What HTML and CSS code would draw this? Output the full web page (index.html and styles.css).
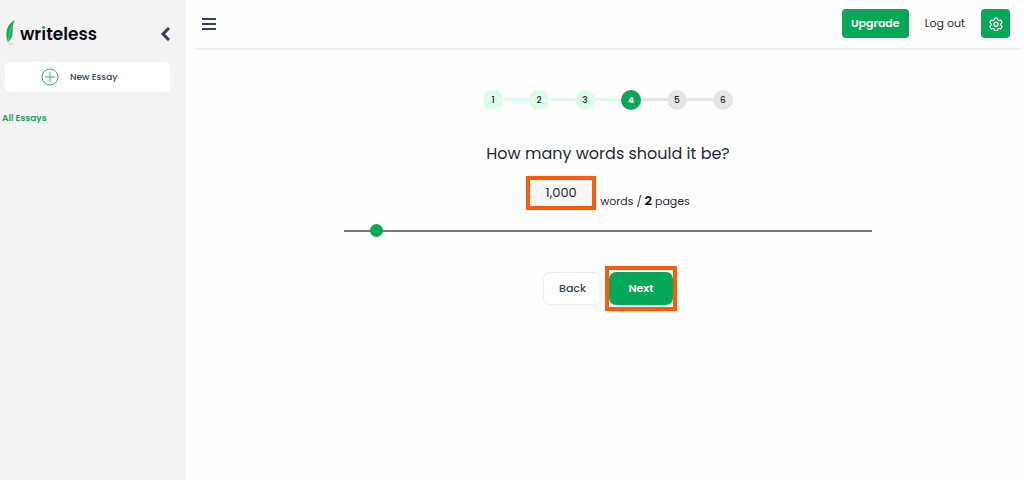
FILE: index.html
```html
<!DOCTYPE html>
<html lang="en">
  <head>
    <meta charset="UTF-8" />
    <meta name="viewport" content="width=device-width, initial-scale=1.0" />
    <title>Writeless | New Essay</title>
    <link rel="stylesheet" href="styles.css">
  </head>
  <body>
    <aside class="sidebar">
      <div class="brand">
        <a class="logo" href="#">
          <svg class="feather" viewBox="0 0 10 27" aria-hidden="true">
            <path d="M9.500 1C5 4 2 8 1.500 13c-.4 4 0 7 1.500 10 2.500-2 4.500-5 4.500-9 0-5 .6-9 2-13z" fill="#11ab59" />
            <path d="M7.500 6C5 11 3.500 17 3.500 23" fill="none" stroke="#8fdcb0" stroke-width=".6" />
            <path d="M2.500 22c.3 2 1.200 3 2.500 3h4" fill="none" stroke="#a9cdb8" stroke-width=".7" />
          </svg>
          <span>wr<span class="logo-i">ı<i></i></span>teless</span>
        </a>
        <button class="icon-button" type="button" aria-label="Collapse sidebar">
          <svg width="10" height="14" viewBox="0 0 10 14">
            <path d="M8 2L3 7l5 5" fill="none" stroke="#374151" stroke-width="3" stroke-linecap="square" />
          </svg>
        </button>
      </div>
      <button class="new-essay" type="button">
        <svg width="18" height="18" viewBox="0 0 18 18" fill="none" stroke="#3fae76" aria-hidden="true">
          <circle cx="9" cy="9" r="8" />
          <path d="M9 4v10M4 9h10" />
        </svg>
        <span>New Essay</span>
      </button>
      <a class="all-essays" href="#">All Essays</a>
    </aside>

    <div class="page">
      <header class="topbar">
        <button class="icon-button" type="button" aria-label="Menu">
          <svg width="14" height="12" viewBox="0 0 14 12" stroke="#374151" stroke-width="2">
            <path d="M0 1h14M0 6h14M0 11h14" />
          </svg>
        </button>
        <nav class="account">
          <button class="upgrade" type="button">Upgrade</button>
          <a class="logout" href="#">Log out</a>
          <button class="settings" type="button" aria-label="Settings">
            <svg width="14" height="14" viewBox="0 0 24 24" fill="none" stroke="white" stroke-width="2" stroke-linejoin="round">
              <path d="M9.600 2h4.800l.7 3.200 1.900 1.100 3.100-1 2.400 4.200-2.400 2.200v2.200l2.400 2.200-2.400 4.200-3.100-1-1.900 1.100-.7 3.100H9.600l-.7-3.100L7 19.300l-3.100 1-2.400-4.200 2.400-2.200v-2.200L1.500 9.500l2.400-4.200 3.100 1 1.900-1.100z" />
              <circle cx="12" cy="12.500" r="3.500" />
            </svg>
          </button>
        </nav>
      </header>

      <main class="wizard">
        <ol class="steps">
          <li class="done">1</li>
          <li class="done">2</li>
          <li class="done">3</li>
          <li class="current" aria-current="step">4</li>
          <li>5</li>
          <li>6</li>
        </ol>
        <h1>How many words should it be?</h1>
        <div class="count">
          <input class="highlight" id="words" type="text" value="1,000" />
          <label for="words">words / <strong>2</strong> pages</label>
        </div>
        <input class="slider" type="range" min="0" max="100" value="5" aria-label="Number of words" />
        <div class="actions">
          <button class="back" type="button">Back</button>
          <span class="highlight">
            <button class="next" type="button">Next</button>
          </span>
        </div>
      </main>
    </div>
  </body>
</html>
```
FILE: styles.css
```css
* {
  box-sizing: border-box;
  padding: 0;
  margin: 0;
}
body {
  display: flex;
  min-height: 100vh;
  font-family: Poppins, Inter, sans-serif;
  font-size: 11px;
  color: #1f2937;
  background-color: #fefefe;
}
button,
input {
  font: inherit;
  color: inherit;
  border: none;
}
a {
  color: inherit;
  text-decoration: none;
}
svg {
  display: block;
}

/* sidebar */
.sidebar {
  flex: 0 0 186px;
  padding: 16px 16px 0 5px;
  background-color: #f3f3f3;
}
.brand {
  display: flex;
  align-items: center;
  justify-content: space-between;
  height: 32px;
}
.logo {
  display: flex;
  align-items: center;
  gap: 5px;
  font-size: 17px;
  font-weight: 600;
  line-height: 32px;
  color: #0b0b12;
}
.logo > span {
  padding-top: 4px;
}
.feather {
  width: 10px;
  height: 27px;
}
.logo-i {
  position: relative;
}
.logo-i i {
  position: absolute;
  top: 4px;
  left: 1px;
  width: 3px;
  height: 3px;
  border-radius: 50%;
  background-color: #11ab59;
}
.icon-button {
  background: none;
}
.brand .icon-button {
  padding-top: 3px;
}
.new-essay {
  display: flex;
  align-items: center;
  gap: 11px;
  width: 100%;
  height: 30px;
  margin-top: 14px;
  padding-left: 36px;
  border-radius: 5px;
  font-size: 9px;
  font-weight: 500;
  color: #374151;
  background-color: white;
}
.all-essays {
  display: block;
  margin: 18px 0 0 -3px;
  font-size: 9px;
  font-weight: 600;
  line-height: 16px;
  color: #16a754;
}

/* header */
.page {
  flex: 1;
  padding: 0 4px 0 10px;
}
.topbar {
  display: flex;
  align-items: center;
  justify-content: space-between;
  height: 50px;
  padding: 0 10px 1px 6px;
  border-bottom: 2px solid #f0f0f0;
}
.account {
  display: flex;
  align-items: center;
  gap: 16px;
}
.upgrade,
.settings {
  height: 29px;
  border-radius: 4px;
  color: white;
  background-color: #05a857;
}
.upgrade {
  width: 67px;
  font-weight: 600;
}
.settings {
  display: grid;
  place-items: center;
  width: 29px;
}

/* wizard */
.wizard {
  display: flex;
  flex-direction: column;
  align-items: center;
  padding-top: 40px;
}
.steps {
  display: flex;
  gap: 26px;
  list-style: none;
}
.steps li {
  position: relative;
  width: 20px;
  height: 20px;
  border-radius: 50%;
  font-size: 9px;
  font-weight: 500;
  line-height: 20px;
  text-align: center;
  background-color: #e5e5e5;
}
.steps li + li::before {
  content: "";
  position: absolute;
  top: 8px;
  right: 100%;
  width: 26px;
  height: 3px;
  background-color: #e5e5e5;
}
.steps .done,
.steps .done + li::before {
  background-color: #dcfce7;
}
.steps .current {
  font-weight: 700;
  color: white;
  background-color: #05a857;
}
h1 {
  margin-top: 32px;
  font-size: 16px;
  font-weight: 400;
  line-height: 24px;
}
.highlight {
  border: 4px solid #ff5a08;
}
.count {
  display: flex;
  align-items: flex-end;
  gap: 4px;
  margin-top: 10px;
}
.count input {
  width: 70px;
  height: 34px;
  font-size: 13px;
  text-align: center;
  background-color: #f8f8f8;
}
.count label {
  line-height: 18px;
}
.count strong {
  font-size: 13px;
  font-weight: 600;
  color: #0b0b12;
}
.slider {
  appearance: none;
  width: 64%;
  height: 13px;
  margin-top: 14px;
  background: none;
}
.slider::-webkit-slider-runnable-track {
  height: 2px;
  background-color: #777;
}
.slider::-webkit-slider-thumb {
  appearance: none;
  width: 13px;
  height: 13px;
  margin-top: -6px;
  border-radius: 50%;
  background-color: #05a857;
}
.actions {
  display: flex;
  align-items: center;
  gap: 3px;
  margin-top: 29px;
  padding-left: 4px;
}
.actions button {
  display: block;
  height: 33px;
  border-radius: 7px;
}
.actions .highlight {
  padding: 2px 0;
}
.back {
  width: 59px;
  border: 1px solid #efefef;
  font-weight: 500;
  color: #374151;
  background-color: white;
  box-shadow: 0 4px 8px rgba(0, 0, 0, 0.02);
}
.next {
  width: 64px;
  font-weight: 600;
  color: white;
  background-color: #05a857;
}
```
